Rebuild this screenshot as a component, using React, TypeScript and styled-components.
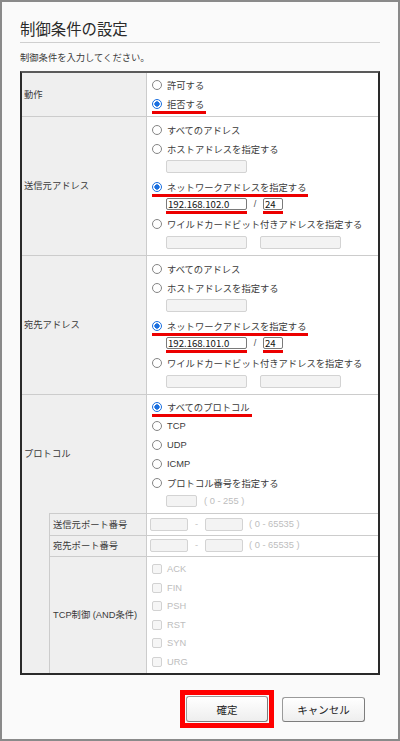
import React from "react";
import styled, { createGlobalStyle, css } from "styled-components";

const RED = "#ec0000";

const GlobalStyle = createGlobalStyle`
  html, body { margin: 0; padding: 0; background: #ffffff; }
  *, *::before, *::after { box-sizing: border-box; }
  body {
    font-family: "Liberation Sans", "Noto Sans CJK JP", sans-serif;
    font-size: 9.3px;
    color: #3a3a3a;
  }
`;

const Frame = styled.div`
  width: 400px;
  height: 741px;
  border: 2px solid #8a8a8a;
  background: #fafafa;
  padding: 14px 18px 0;
  display: flex;
  flex-direction: column;
`;

const Title = styled.h1`
  margin: 0;
  font-family: "Noto Sans CJK JP", sans-serif;
  font-size: 15.4px;
  font-weight: normal;
  line-height: 24px;
  padding: 0 0 2px;
  border-bottom: 1px solid #cfcfcf;
  color: #2a2a2a;
`;

const Lead = styled.p`
  margin: 8px 0 0;
  line-height: 14px;
`;

const Table = styled.div`
  margin-top: 6px;
  display: grid;
  grid-template-columns: 28px 97px 1fr;
  border: 2px solid #2a2a2a;
  border-top-color: #5a5a5a;
  background: #ffffff;
`;

const Label = styled.div<{ $row: number; $sub?: boolean; $first?: boolean }>`
  grid-row: ${(p) => p.$row};
  grid-column: ${(p) => (p.$sub ? "2" : "1 / 3")};
  background: #efefef;
  border-right: 1px solid #cccccc;
  border-top: ${(p) => (p.$first ? "none" : "1px solid #cccccc")};
  display: flex;
  align-items: center;
  padding-left: ${(p) => (p.$sub ? "3px" : "2px")};
  line-height: 14px;
`;

const Indent = styled.div`
  grid-row: 5 / 8;
  grid-column: 1;
  background: #efefef;
  border-right: 1px solid #cccccc;
`;

const Value = styled.div<{ $row: number; $first?: boolean; $pad: string }>`
  grid-row: ${(p) => p.$row};
  grid-column: 3;
  border-top: ${(p) => (p.$first ? "none" : "1px solid #cccccc")};
  padding: ${(p) => p.$pad};
  display: flex;
  flex-direction: column;
  align-items: flex-start;
`;

const Option = styled.label<{ $marked?: boolean; $mt?: number }>`
  position: relative;
  display: inline-flex;
  align-items: center;
  height: 19px;
  padding-left: 5px;
  gap: 5px;
  margin-top: ${(p) => p.$mt ?? 0}px;
  white-space: nowrap;
  ${(p) =>
    p.$marked &&
    css`
      &::after {
        content: "";
        position: absolute;
        left: 5px;
        right: -2px;
        bottom: -1px;
        height: 3px;
        background: ${RED};
      }
    `}
`;

const Radio = styled.input.attrs({ type: "radio" })`
  appearance: none;
  -webkit-appearance: none;
  margin: 0;
  width: 10px;
  height: 10px;
  flex: none;
  border-radius: 50%;
  border: 1px solid #858585;
  background: #ffffff;
  &:checked {
    border-color: #1a6fe0;
    background: radial-gradient(circle, #1a6fe0 0 2.4px, #ffffff 2.9px);
  }
`;

const InputLine = styled.div<{ $mt: number; $pl?: number }>`
  display: flex;
  align-items: flex-start;
  padding-left: ${(p) => p.$pl ?? 19}px;
  margin-top: ${(p) => p.$mt}px;
`;

const Field = styled.input<{ $w: number; $h: number; $filled?: boolean; $ml?: number }>`
  width: ${(p) => p.$w}px;
  height: ${(p) => p.$h}px;
  margin: 0 0 0 ${(p) => p.$ml ?? 0}px;
  padding: 0 1px;
  border: 1px solid ${(p) => (p.$filled ? "#7a7a7a" : "#d3d3d3")};
  border-radius: 2px;
  background: ${(p) => (p.$filled ? "#ffffff" : "#f3f3f3")};
  font-family: "Noto Sans CJK JP", "Liberation Sans", sans-serif;
  font-size: 9.6px;
  line-height: 10px;
  color: #111111;
  outline: none;
`;

const Mark = styled.span`
  display: inline-flex;
  padding-bottom: 1px;
  border-bottom: 3px solid ${RED};
`;

const Sep = styled.span<{ $w: number; $muted?: boolean }>`
  width: ${(p) => p.$w}px;
  text-align: center;
  line-height: ${(p) => (p.$muted ? 13 : 12)}px;
  color: ${(p) => (p.$muted ? "#c4c4c4" : "#555555")};
`;

const Hint = styled.span<{ $ml: number; $lh: number }>`
  margin-left: ${(p) => p.$ml}px;
  line-height: ${(p) => p.$lh}px;
  color: #bdbdbd;
  white-space: nowrap;
`;

const CheckLine = styled.label`
  display: flex;
  align-items: center;
  height: 18.5px;
  padding-left: 5px;
  gap: 5px;
  color: #bdbdbd;
`;

const Check = styled.input.attrs({ type: "checkbox", disabled: true })`
  appearance: none;
  -webkit-appearance: none;
  margin: 0;
  width: 10px;
  height: 10px;
  border: 1px solid #d2d2d2;
  border-radius: 2px;
  background: #f6f6f6;
`;

const ButtonBar = styled.div`
  display: flex;
  justify-content: flex-end;
  align-items: center;
  gap: 8px;
  margin-top: 15px;
  padding-right: 15px;
`;

const Highlight = styled.div`
  display: flex;
  border: 5px solid #ff0000;
  padding: 1px;
`;

const Button = styled.button<{ $w: number; $h: number }>`
  width: ${(p) => p.$w}px;
  height: ${(p) => p.$h}px;
  margin: 0;
  padding: 0;
  border: 1px solid #9a9a9a;
  border-right-color: #7d7d7d;
  border-bottom-color: #7d7d7d;
  border-radius: 3px;
  background: linear-gradient(#ffffff, #eeeeee);
  font-family: "Noto Sans CJK JP", "Liberation Sans", sans-serif;
  font-size: 10.5px;
  color: #222222;
`;

type AddrProps = { name: string; net: string; row: number };

const AddressCell: React.FC<AddrProps> = ({ name, net, row }) => (
  <Value $row={row} $pad="3px 0 6px 0">
    <Option>
      <Radio name={name} />
      すべてのアドレス
    </Option>
    <Option>
      <Radio name={name} />
      ホストアドレスを指定する
    </Option>
    <InputLine $mt={2}>
      <Field $w={81} $h={13} disabled />
    </InputLine>
    <Option $marked $mt={4}>
      <Radio name={name} defaultChecked />
      ネットワークアドレスを指定する
    </Option>
    <InputLine $mt={2}>
      <Mark>
        <Field $w={81} $h={12} $filled defaultValue={net} />
      </Mark>
      <Sep $w={16}>/</Sep>
      <Mark>
        <Field $w={20} $h={12} $filled defaultValue="24" />
      </Mark>
    </InputLine>
    <Option>
      <Radio name={name} />
      ワイルドカードビット付きアドレスを指定する
    </Option>
    <InputLine $mt={3}>
      <Field $w={81} $h={13} disabled />
      <Field $w={81} $h={13} $ml={13} disabled />
    </InputLine>
  </Value>
);

const PortCell: React.FC<{ row: number; pad: string }> = ({ row, pad }) => (
  <Value $row={row} $pad={pad}>
    <InputLine $mt={0} $pl={3}>
      <Field $w={38} $h={13} disabled />
      <Sep $w={17} $muted>-</Sep>
      <Field $w={38} $h={13} disabled />
      <Hint $ml={6} $lh={13}>( 0 - 65535 )</Hint>
    </InputLine>
  </Value>
);

const flags = ["ACK", "FIN", "PSH", "RST", "SYN", "URG"];

export default function App() {
  return (
    <>
      <GlobalStyle />
      <Frame>
        <Title>制御条件の設定</Title>
        <Lead>制御条件を入力してください。</Lead>
        <Table>
          <Label $row={1} $first>動作</Label>
          <Value $row={1} $first $pad="2px 0 3px 0">
            <Option>
              <Radio name="action" />
              許可する
            </Option>
            <Option $marked>
              <Radio name="action" defaultChecked />
              拒否する
            </Option>
          </Value>

          <Label $row={2}>送信元アドレス</Label>
          <AddressCell row={2} name="src" net="192.168.102.0" />

          <Label $row={3}>宛先アドレス</Label>
          <AddressCell row={3} name="dst" net="192.168.101.0" />

          <Label $row={4}>プロトコル</Label>
          <Value $row={4} $pad="2px 0 6px 0">
            <Option $marked>
              <Radio name="proto" defaultChecked />
              すべてのプロトコル
            </Option>
            <Option>
              <Radio name="proto" />
              TCP
            </Option>
            <Option>
              <Radio name="proto" />
              UDP
            </Option>
            <Option>
              <Radio name="proto" />
              ICMP
            </Option>
            <Option>
              <Radio name="proto" />
              プロトコル番号を指定する
            </Option>
            <InputLine $mt={3}>
              <Field $w={31} $h={12} disabled />
              <Hint $ml={7} $lh={12}>( 0 - 255 )</Hint>
            </InputLine>
          </Value>

          <Indent />
          <Label $row={5} $sub>送信元ポート番号</Label>
          <PortCell row={5} pad="4px 0 4px 0" />
          <Label $row={6} $sub>宛先ポート番号</Label>
          <PortCell row={6} pad="3px 0 4px 0" />
          <Label $row={7} $sub>TCP制御 (AND条件)</Label>
          <Value $row={7} $pad="3px 0 2px 0">
            {flags.map((f) => (
              <CheckLine key={f}>
                <Check />
                {f}
              </CheckLine>
            ))}
          </Value>
        </Table>
        <ButtonBar>
          <Highlight>
            <Button $w={82} $h={26}>確定</Button>
          </Highlight>
          <Button $w={83} $h={25}>キャンセル</Button>
        </ButtonBar>
      </Frame>
    </>
  );
}
